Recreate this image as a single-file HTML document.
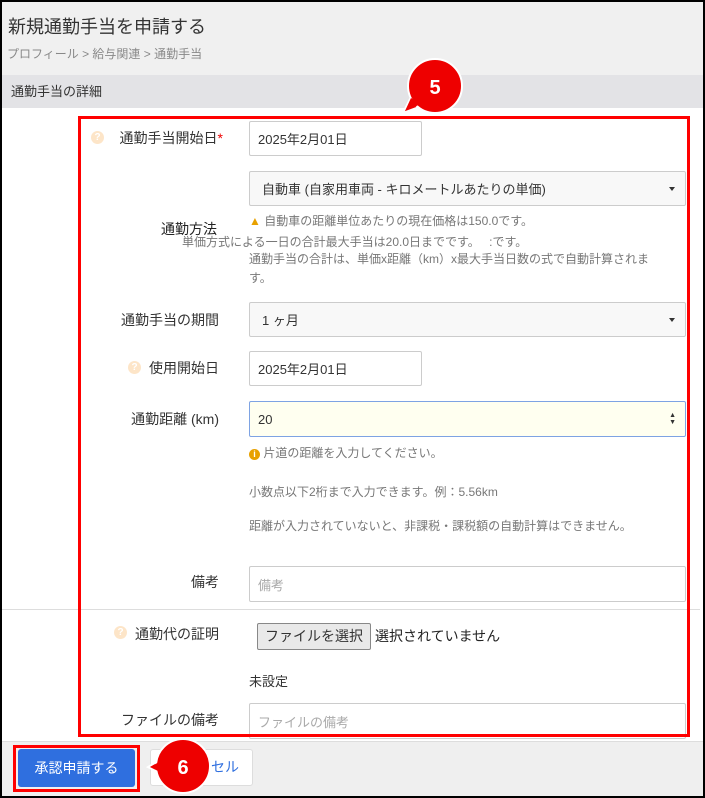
<!DOCTYPE html>
<html><head><meta charset="utf-8"><style>
*{margin:0;padding:0;box-sizing:border-box}
body{width:705px;height:798px;position:relative;overflow:hidden;background:#fff;font-family:"Liberation Sans","Noto Sans CJK JP",sans-serif;color:#333}
.a{position:absolute;white-space:nowrap}
.lbl{font-size:14px;color:#333;text-align:right;right:486px}
.inp{position:absolute;border:1px solid #ccc;border-radius:2px;background:#fff;font-size:13px;padding-left:8px;display:flex;align-items:center}
.sel{background:#f8f8f8;padding-left:12px}
.caret{position:absolute;right:10px;top:50%;margin-top:-2px;border-left:3px solid transparent;border-right:3px solid transparent;border-top:4px solid #333}
.q{position:absolute;width:13px;height:13px;border-radius:50%;background:#fde5c8;color:#fff;font-size:10px;font-weight:bold;text-align:center;line-height:13px}
.help{font-size:12px;color:#777}
</style></head><body>
<div class="a" style="left:0;top:0;width:705px;height:75px;background:#f0f0f0"></div>
<div class="a" style="left:0;top:75px;width:705px;height:33px;background:#e3e3e6"></div>
<div class="a" style="left:8px;top:13px;font-size:18px;color:#333">新規通勤手当を申請する</div>
<div class="a" style="left:7px;top:45px;font-size:12px;color:#888">プロフィール &gt; 給与関連 &gt; 通勤手当</div>
<div class="a" style="left:11px;top:81px;font-size:13px;color:#333">通勤手当の詳細</div>

<div class="q" style="left:91px;top:131px">?</div>
<div class="a lbl" style="right:482px;top:128px">通勤手当開始日<span style="color:#e00">*</span></div>
<div class="inp" style="left:249px;top:121px;width:173px;height:35px">2025年2月01日</div>

<div class="inp sel" style="left:249px;top:171px;width:437px;height:35px">自動車 (自家用車両 - キロメートルあたりの単価)<span class="caret"></span></div>
<div class="a lbl" style="right:488px;top:219px;color:#222">通勤方法</div>
<div class="a help" style="left:249px;top:212px"><span style="color:#e8a100">▲</span> 自動車の距離単位あたりの現在価格は150.0です。</div>
<div class="a help" style="left:182px;top:233px">単価方式による一日の合計最大手当は20.0日までです。　 :です。</div>
<div class="a help" style="left:249px;top:250px">通勤手当の合計は、単価x距離（km）x最大手当日数の式で自動計算されま</div>
<div class="a help" style="left:249px;top:269px">す。</div>

<div class="a lbl" style="top:310px">通勤手当の期間</div>
<div class="inp sel" style="left:249px;top:302px;width:437px;height:35px">1 ヶ月<span class="caret"></span></div>

<div class="q" style="left:128px;top:361px">?</div>
<div class="a lbl" style="top:358px">使用開始日</div>
<div class="inp" style="left:249px;top:351px;width:173px;height:35px">2025年2月01日</div>

<div class="a lbl" style="top:409px">通勤距離 (km)</div>
<div class="inp" style="left:249px;top:401px;width:437px;height:36px;background:#fffff0;border-color:#7ea3e3">20<span style="position:absolute;right:9px;top:10px;font-size:7px;line-height:7px;color:#333">▲<br>▼</span></div>
<div class="a help" style="left:249px;top:444px"><span style="display:inline-block;width:11px;height:11px;border-radius:50%;background:#e8a100;color:#fff;font-size:9px;text-align:center;line-height:11px;font-weight:bold">i</span> 片道の距離を入力してください。</div>
<div class="a help" style="left:249px;top:483px">小数点以下2桁まで入力できます。例：5.56km</div>
<div class="a help" style="left:249px;top:517px">距離が入力されていないと、非課税・課税額の自動計算はできません。</div>

<div class="a lbl" style="top:572px">備考</div>
<div class="inp" style="left:249px;top:566px;width:437px;height:36px;color:#aaa">備考</div>
<div class="a" style="left:0;top:609px;width:700px;height:1px;background:#ddd"></div>

<div class="q" style="left:114px;top:626px">?</div>
<div class="a lbl" style="top:624px">通勤代の証明</div>
<div class="a" style="left:257px;top:623px;width:114px;height:27px;border:1px solid #888;border-radius:2px;background:#e9e9e9;font-size:14px;text-align:center;line-height:25px">ファイルを選択</div>
<div class="a" style="left:375px;top:626px;font-size:14px;color:#222">選択されていません</div>
<div class="a" style="left:249px;top:671px;font-size:13px;color:#333">未設定</div>
<div class="a lbl" style="top:710px">ファイルの備考</div>
<div class="inp" style="left:249px;top:703px;width:437px;height:36px;color:#aaa">ファイルの備考</div>

<div class="a" style="left:0;top:741px;width:705px;height:57px;background:#efefef;border-top:1px solid #ddd"></div>
<div class="a" style="left:13px;top:745px;width:127px;height:47px;border:3px solid #f00"></div>
<div class="a" style="left:18px;top:749px;width:117px;height:38px;background:#2f6fdf;border-radius:3px;color:#fff;font-size:14px;text-align:center;line-height:38px">承認申請する</div>
<div class="a" style="left:150px;top:749px;width:103px;height:37px;background:#fff;border:1px solid #ddd;border-radius:3px;color:#2f6fdf;font-size:14px;line-height:35px;padding-left:60px">セル</div>

<div class="a" style="left:78px;top:116px;width:612px;height:621px;border:3px solid #f00"></div>

<svg class="a" style="left:0;top:0" width="705" height="798">
<g stroke="#fff" stroke-width="2" fill="#e00">
<path d="M410,99 L403,113 L422,106 Z"/>
<circle cx="435" cy="86" r="27"/>
<path d="M160,760 L148,767 L162,774 Z"/>
<circle cx="183" cy="766" r="27"/>
</g>
<path d="M411,98 L405,111 L421,104" fill="#e00"/>
<path d="M161,761 L150,767 L162,773" fill="#e00"/>
<text x="435" y="94" fill="#fff" font-size="20" font-weight="bold" text-anchor="middle" font-family="Liberation Sans">5</text>
<text x="183" y="774" fill="#fff" font-size="20" font-weight="bold" text-anchor="middle" font-family="Liberation Sans">6</text>
</svg>
<div class="a" style="left:0;top:0;width:705px;height:798px;border:2px solid #000"></div>
</body></html>
